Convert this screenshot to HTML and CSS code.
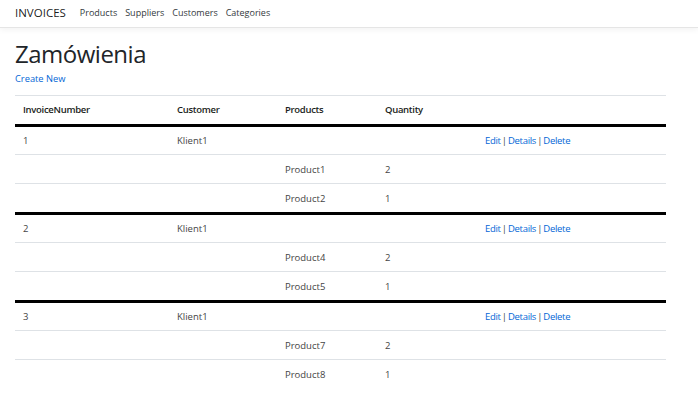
FILE: index.html
```html
<!DOCTYPE html>
<html lang="pl">
<head>
<meta charset="utf-8">
<title>Zamówienia</title>
<link rel="stylesheet" href="styles.css">
</head>
<body>
<header class="navbar">
  <a class="brand" href="#">INVOICES</a>
  <nav class="nav">
    <a href="#">Products</a>
    <a href="#">Suppliers</a>
    <a href="#">Customers</a>
    <a href="#">Categories</a>
  </nav>
</header>
<main class="container">
  <h1 class="title">Zamówienia</h1>
  <p class="create"><a href="#">Create New</a></p>
  <table class="table">
    <thead>
      <tr><th class="c1">InvoiceNumber</th><th class="c2">Customer</th><th class="c3">Products</th><th class="c4">Quantity</th><th class="c5"></th></tr>
    </thead>
    <tbody>
      <tr><td>1</td><td>Klient1</td><td></td><td></td><td class="actions"><a href="#">Edit</a> | <a href="#">Details</a> | <a href="#">Delete</a></td></tr>
      <tr><td></td><td></td><td>Product1</td><td>2</td><td></td></tr>
      <tr><td></td><td></td><td>Product2</td><td>1</td><td></td></tr>
    </tbody>
    <tbody>
      <tr><td>2</td><td>Klient1</td><td></td><td></td><td class="actions"><a href="#">Edit</a> | <a href="#">Details</a> | <a href="#">Delete</a></td></tr>
      <tr><td></td><td></td><td>Product4</td><td>2</td><td></td></tr>
      <tr><td></td><td></td><td>Product5</td><td>1</td><td></td></tr>
    </tbody>
    <tbody>
      <tr><td>3</td><td>Klient1</td><td></td><td></td><td class="actions"><a href="#">Edit</a> | <a href="#">Details</a> | <a href="#">Delete</a></td></tr>
      <tr><td></td><td></td><td>Product7</td><td>2</td><td></td></tr>
      <tr><td></td><td></td><td>Product8</td><td>1</td><td></td></tr>
    </tbody>
  </table>
</main>
</body>
</html>
```
FILE: styles.css
```css
html, body {
  margin: 0;
  padding: 0;
  background: #fff;
  font-family: "Open Sans", "Noto Sans", sans-serif;
  color: #212529;
}
a { text-decoration: none; color: #0366d6; }

.navbar {
  display: flex;
  align-items: center;
  height: 28px;
  padding: 0 15px 3px;
  box-sizing: border-box;
  border-bottom: 1px solid #e5e5e5;
  box-shadow: 0 2px 6px rgba(0,0,0,0.05);
}
.brand {
  color: rgba(0,0,0,0.9);
  font-size: 11.5px;
  margin-right: 14px;
}
.nav { display: flex; gap: 8px; }
.nav a { color: #343a40; font-size: 9px; }

.container { padding: 0 32px 0 15px; }
.title {
  margin: 10px 0 0;
  font-size: 24px;
  font-weight: 500;
  letter-spacing: -0.5px;
  line-height: 32px;
}
.create { margin: 2px 0 9px; font-size: 9.3px; line-height: 14px; }

.table {
  width: 651px;
  border-collapse: collapse;
  font-size: 9.5px;
  line-height: 14px;
}
.table th, .table td {
  text-align: left;
  padding: 8px 8px 6px;
  border-top: 1px solid #dee2e6;
  vertical-align: top;
}
.table th { padding: 7px 8px; font-weight: 600; color: #1a1d20; letter-spacing: -0.3px; }
.table td { color: #444; }
.table tbody tr:first-child td { border-top: 3px solid #000; padding-top: 7px; padding-bottom: 6px; }
.actions { word-spacing: -1px; letter-spacing: -0.3px; }
.c1 { width: 138px; }
.c2 { width: 92px; }
.c3 { width: 84px; }
.c4 { width: 84px; }
```
